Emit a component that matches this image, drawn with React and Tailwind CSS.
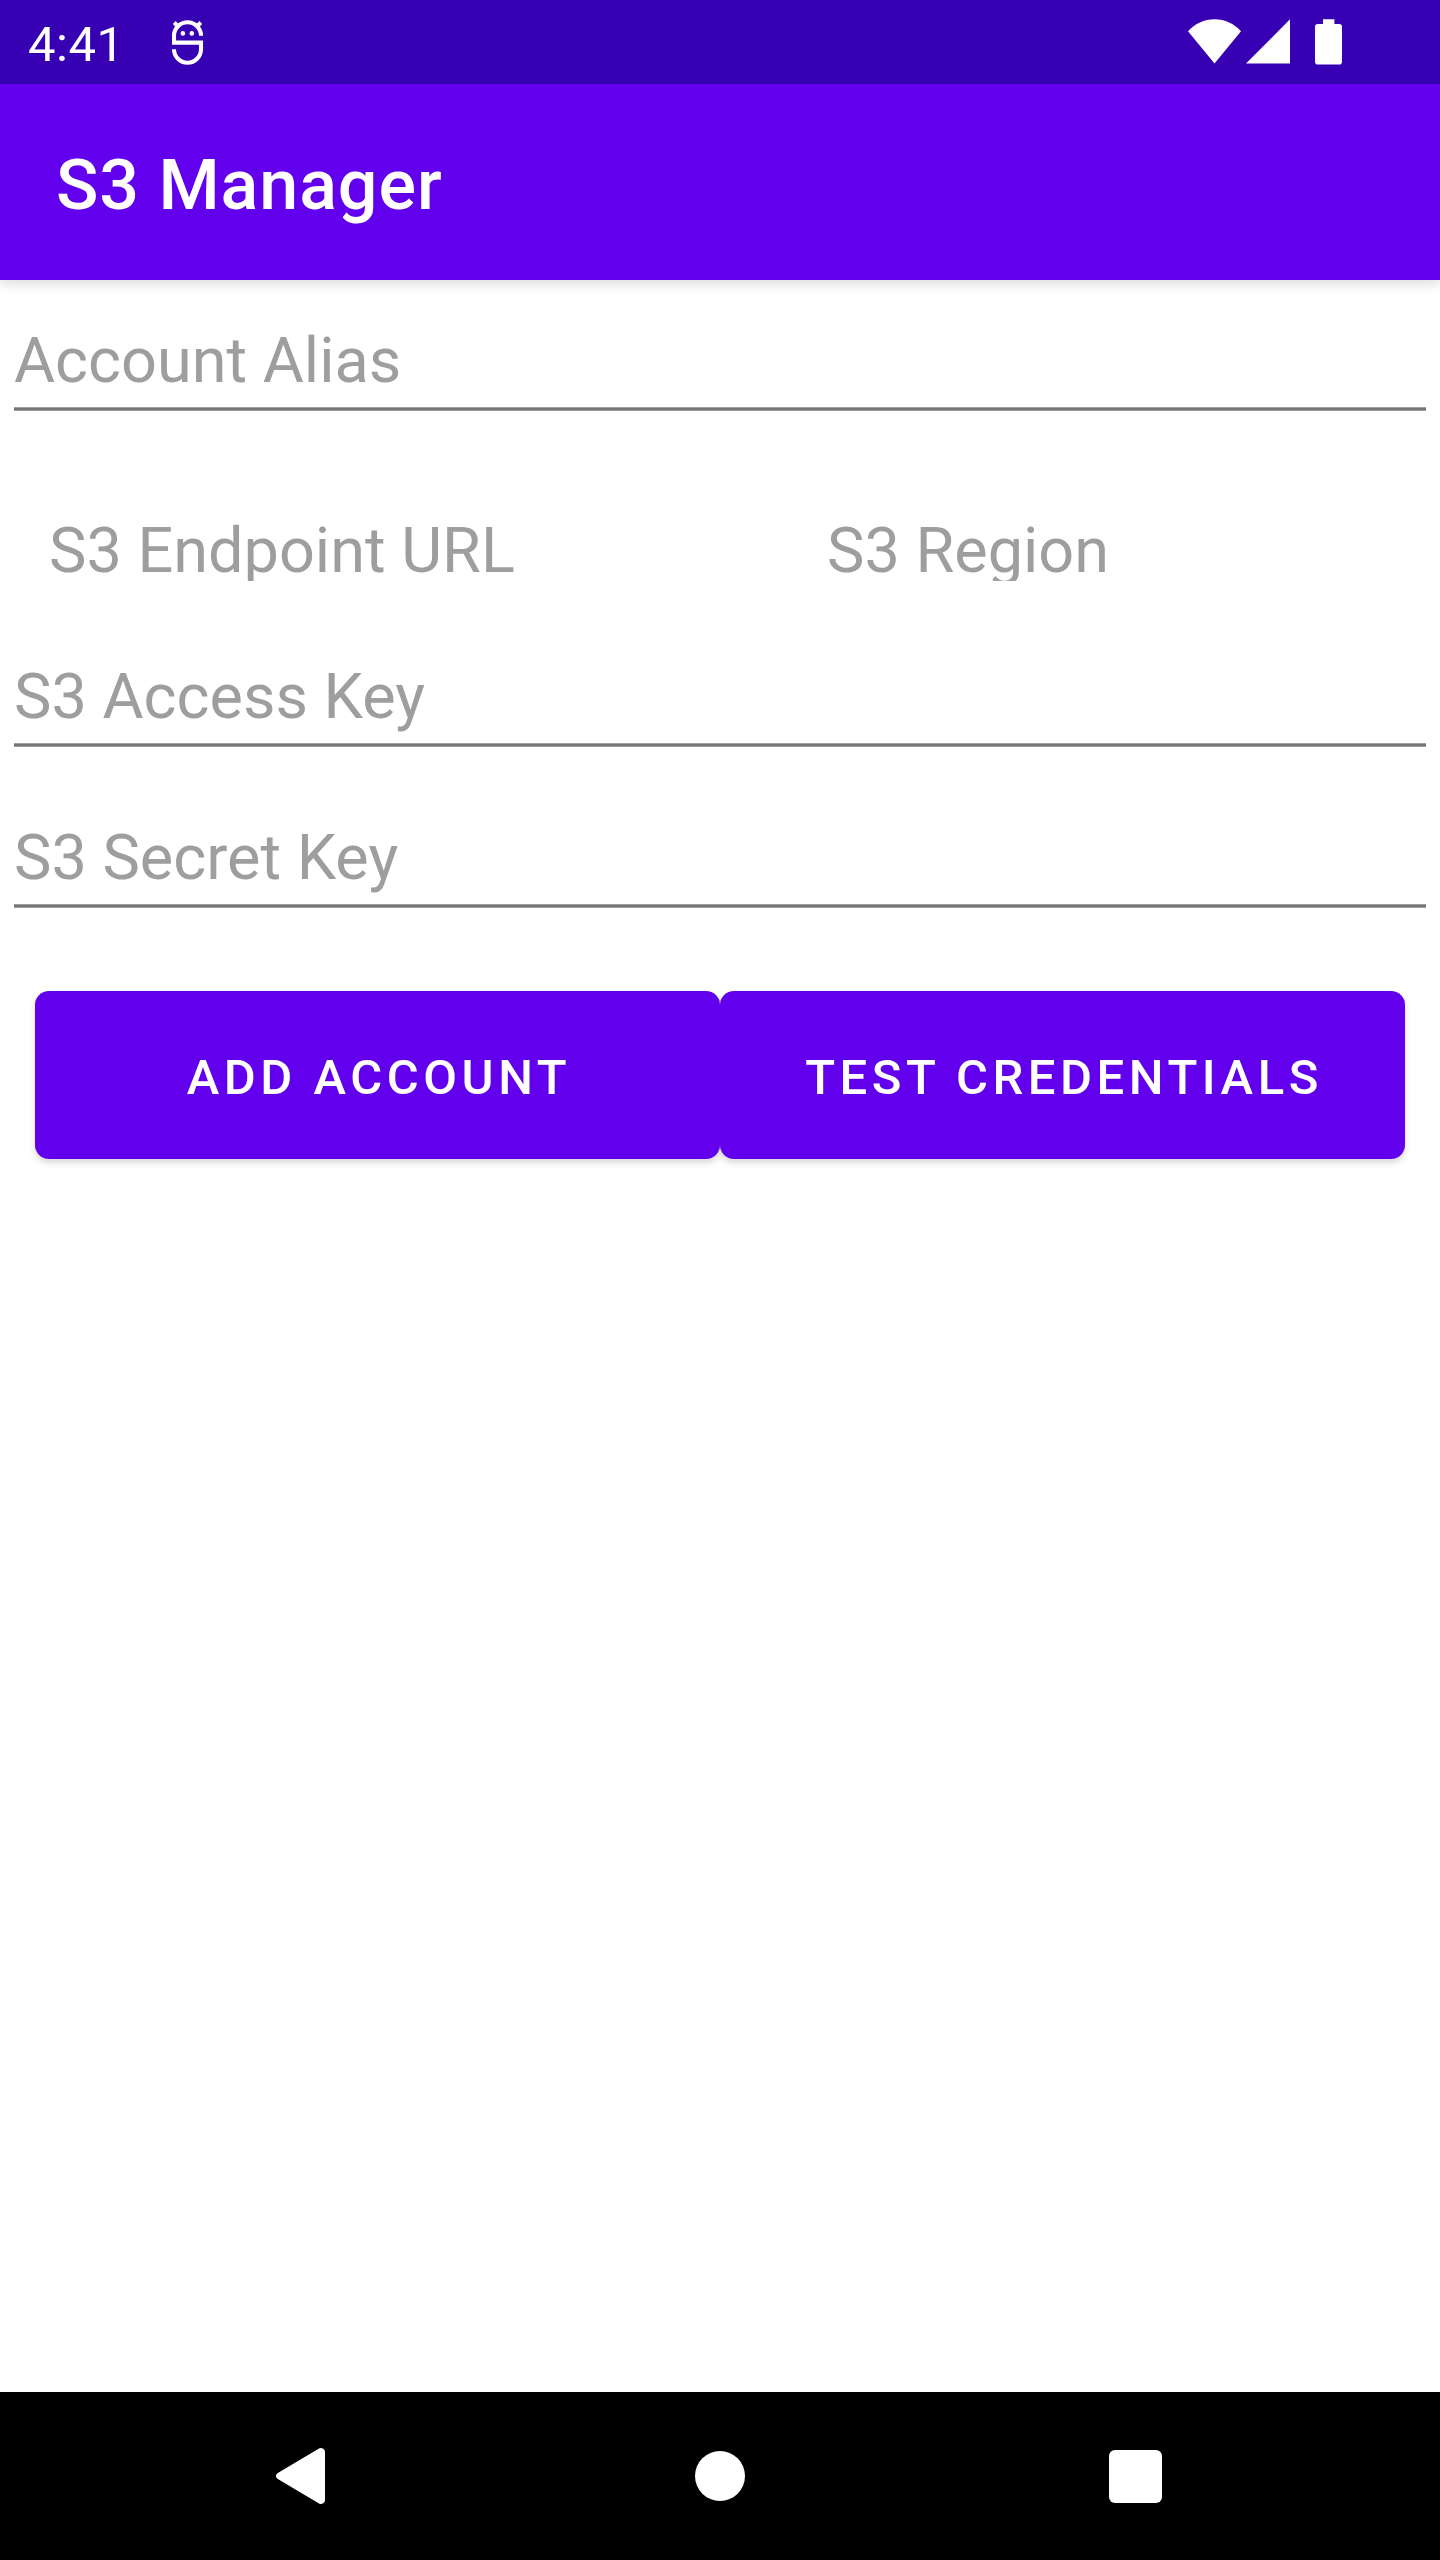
const hint = 'text-[63px] leading-[74px] text-[#9e9e9e] whitespace-nowrap';

function Underline() {
  return <div className="mt-[9px] h-1 border-y border-[#9e9e9e] bg-[#757575]" />;
}

function Field({ label, className }) {
  return (
    <div className={`px-3.5 ${className}`}>
      <div className={hint}>{label}</div>
      <Underline />
    </div>
  );
}

function StatusBar() {
  return (
    <header className="flex h-[84px] items-start bg-[#3700b3] text-white">
      <div className="ml-7 mt-4 w-[144px] text-[49px] leading-[58px] tracking-[0.5px]">4:41</div>
      <svg className="mt-[19px] h-[46px] w-[32px]" viewBox="0 0 32 46" fill="none" stroke="currentColor" strokeWidth="4.1">
        <path d="M29 16.8A13.5 13.5 0 0 0 2 16.8V23.6H29V30.2A13.5 13.5 0 0 1 2 30.2" />
        <path d="M2.2 3.5L7 8.3M28.8 3.5L24 8.3" strokeWidth="4" />
        <circle cx="10.9" cy="14.4" r="2.3" fill="currentColor" stroke="none" />
        <circle cx="19.8" cy="14.4" r="2.3" fill="currentColor" stroke="none" />
      </svg>
      <svg className="ml-auto mt-[19px] h-[46px] w-[53px]" viewBox="0 0 53 46" fill="currentColor">
        <path d="M0 12.3C7 4.5 16 0.2 26.5 0.2S46 4.5 53 12.3L26.5 44.5Z" />
      </svg>
      <svg className="ml-[5px] mt-[19px] h-[46px] w-[44px]" viewBox="0 0 44 46" fill="currentColor">
        <path d="M0 44.5H44V0.3Z" />
      </svg>
      <svg className="ml-[25px] mr-[98px] mt-[19px] h-[46px] w-[27px]" viewBox="0 0 27 46" fill="currentColor">
        <path d="M8 0.2H19.4V4.9H24.2A2.8 2.8 0 0 1 27 7.7V42.8A2.8 2.8 0 0 1 24.2 45.6H2.8A2.8 2.8 0 0 1 0 42.8V7.7A2.8 2.8 0 0 1 2.8 4.9H8Z" />
      </svg>
    </header>
  );
}

function ActionButton({ children }) {
  return (
    <button className="flex h-[168px] flex-1 items-center justify-center rounded-[14px] bg-[#6200ee] pl-[3px] pt-1.5 text-[49px] font-medium leading-[58px] tracking-[0.0925em] text-white">
      {children}
    </button>
  );
}

function NavBar() {
  return (
    <nav className="flex h-[168px] items-center bg-black text-white">
      <svg className="ml-[276px] h-14 w-[49px]" viewBox="0 0 49 56" fill="currentColor">
        <path d="M43 0.6Q45 -0.6 47.2 0.7Q49 1.8 49 4V52Q49 54.2 47.2 55.3Q45 56.6 43 55.4L1.8 31Q0 29.9 0 28T1.8 25Z" />
      </svg>
      <div className="ml-[370px] size-[50px] rounded-full bg-white" />
      <div className="ml-[363.5px] size-[53px] rounded-md bg-white" />
    </nav>
  );
}

export default function App() {
  return (
    <div className="flex h-[2560px] w-[1440px] flex-col overflow-hidden bg-white font-[Roboto,sans-serif]">
      <StatusBar />
      <div className="flex h-[196px] items-center bg-[#6200ee] px-14 pt-1.5 text-[70px] font-medium leading-[82px] tracking-[0.0135em] text-white shadow-[0_4px_12px_rgba(0,0,0,0.14)]">
        <h1>S3 Manager</h1>
      </div>
      <main className="flex-1">
        <Field label="Account Alias" className="pt-11" />
        <div className="flex h-[170px] overflow-hidden pl-[49px] pt-[103px]">
          <div className={`w-[778px] ${hint}`}>S3 Endpoint URL</div>
          <div className={hint}>S3 Region</div>
        </div>
        <Field label="S3 Access Key" className="pt-[79px]" />
        <Field label="S3 Secret Key" className="pt-[74px]" />
        <div className="mt-[83px] flex px-[35px] drop-shadow-[0_4px_3px_rgba(0,0,0,0.15)]">
          <ActionButton>ADD ACCOUNT</ActionButton>
          <ActionButton>TEST CREDENTIALS</ActionButton>
        </div>
      </main>
      <NavBar />
    </div>
  );
}
